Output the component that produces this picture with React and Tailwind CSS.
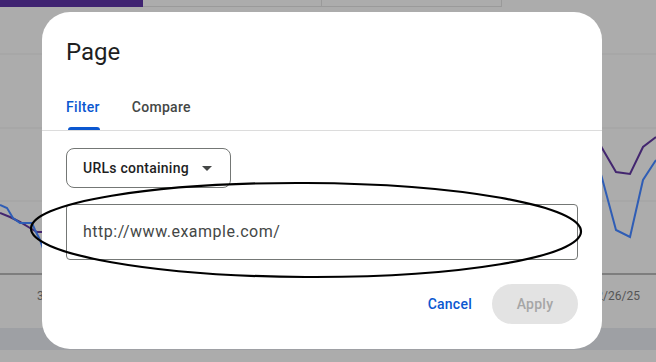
const blueLeft = "0,198 7,201 13,211 20,216 32,216 35,223 40,233 46,250";
const purpleLeft = "0,206 10,210 20,215 30,221 37,225 48,225";
const purpleRight = "596,130 602,141 616,165 630,167 643,140 656,130";
const blueRight = "596,150 602,171 616,223 630,230 643,173 656,153";

function BackgroundChart() {
    return (
        <div className="flex flex-col w-full h-full">
            <div className="flex h-[7px] shrink-0">
                <div className="w-[143px] h-[7px] bg-[#3f2371]" />
                <div className="w-[179px] h-[7px] border-r border-b border-[#9a9a9a]" />
                <div className="w-[180px] h-[7px] border-r border-b border-[#9a9a9a]" />
            </div>
            <svg width="656" height="321" className="block shrink-0">
                <line x1="0" y1="47" x2="656" y2="47" stroke="#a2a2a2" strokeWidth="1" />
                <line x1="0" y1="121" x2="656" y2="121" stroke="#a2a2a2" strokeWidth="1" />
                <line x1="0" y1="194" x2="656" y2="194" stroke="#a2a2a2" strokeWidth="1" />
                <line x1="0" y1="267" x2="656" y2="267" stroke="#7e7e7e" strokeWidth="2" />
                <polyline points={purpleLeft} fill="none" stroke="#43266f" strokeWidth="2" />
                <polyline points={blueLeft} fill="none" stroke="#2f5db5" strokeWidth="2" />
                <polyline points={purpleRight} fill="none" stroke="#43266f" strokeWidth="2" />
                <polyline points={blueRight} fill="none" stroke="#2f5db5" strokeWidth="2" />
                <text x="37" y="293" fontSize="12" fill="#555" fontFamily="Roboto, sans-serif">3/1/25</text>
                <text x="640" y="293" fontSize="12" fill="#555" textAnchor="end" fontFamily="Roboto, sans-serif">12/26/25</text>
            </svg>
            <div className="h-[22px] shrink-0 bg-[#9ea0a4]" />
            <div className="flex-1" />
        </div>
    )
}

function Dialog() {
    return (
        <div className="absolute left-[42px] top-[12px] w-[560px] h-[337px] rounded-[28px] bg-white flex flex-col font-['Roboto',sans-serif]">
            <h2 className="pl-6 pt-[26px] text-[24px] leading-[28px] text-[#1f1f1f]">Page</h2>
            <div className="mt-[18px] flex gap-8 pl-6 border-b border-[#dcdcdc] h-[47px] tracking-[0.3px]">
                <div className="relative flex items-center text-sm font-medium text-[#0b57d0]">
                    Filter
                    <div className="absolute bottom-0 left-[2px] right-0 h-[3px] rounded-t-[3px] bg-[#0b57d0]" />
                </div>
                <div className="flex items-center text-sm font-medium text-[#444746]">Compare</div>
            </div>
            <div className="px-6 pt-[17px] flex flex-col">
                <div className="w-[165px] h-[40px] rounded-lg border border-[#747775] flex items-center justify-between pl-4 pr-[18px]">
                    <span className="text-sm font-medium text-[#1f1f1f] tracking-[0.25px]">URLs containing</span>
                    <span className="w-0 h-0 border-l-[5px] border-r-[5px] border-t-[5px] border-l-transparent border-r-transparent border-t-[#444746]" />
                </div>
                <div className="mt-4 w-[512px] h-[56px] rounded-[4px] border border-[#747775] flex items-center px-4">
                    <span className="text-base text-[#444746] tracking-[0.5px]">http://www.example.com/</span>
                </div>
            </div>
            <div className="mt-6 flex justify-end items-center gap-2 pr-6 tracking-[0.25px]">
                <button className="h-10 px-3 text-sm font-medium text-[#0b57d0] rounded-full">Cancel</button>
                <button className="h-10 w-[86px] rounded-full bg-[#e3e3e3] text-sm font-medium text-[#a6a6a6]">Apply</button>
            </div>
        </div>
    )
}

export default function App() {
    return (
        <div className="relative w-[656px] h-[362px] overflow-hidden bg-[#acacac]">
            <BackgroundChart />
            <Dialog />
            <svg className="absolute inset-0 pointer-events-none" width="656" height="362">
                <ellipse cx="306" cy="230" rx="275" ry="47" fill="none" stroke="#000" strokeWidth="2.2" transform="rotate(0.3 306 230)" />
            </svg>
        </div>
    )
}
